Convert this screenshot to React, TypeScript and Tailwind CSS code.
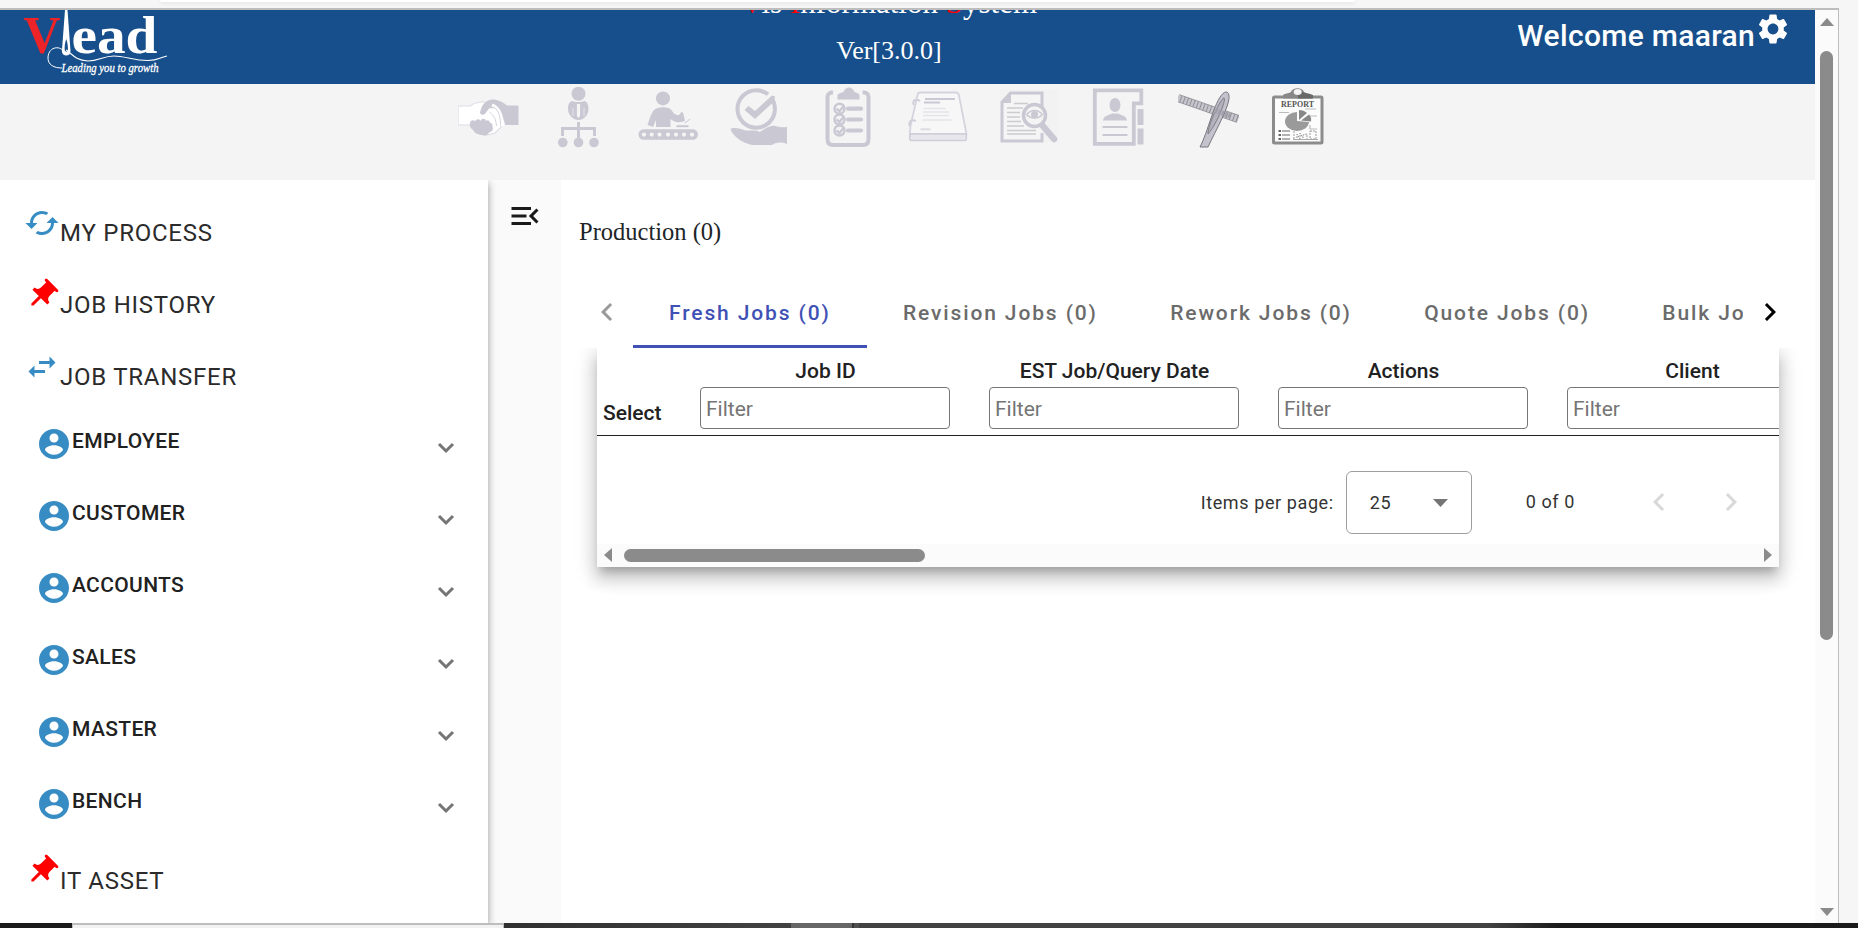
import React from "react";

const C = "#c9c8d3";

function Logo() {
  return (
    <svg width="170" height="74" viewBox="0 10 170 74" className="block">
      <text x="23.5" y="52.5" fontFamily="Liberation Serif, serif" fontWeight="700" fontSize="53" fill="#ec2427" textLength="37" lengthAdjust="spacingAndGlyphs">V</text>
      <text x="71.5" y="52.5" fontFamily="Liberation Serif, serif" fontWeight="700" fontSize="52" fill="#fff" textLength="86" lengthAdjust="spacingAndGlyphs">ead</text>
      <path d="M65 10h2.5l3 41c.2 6-8.600 6-8.600 0z" fill="#fff" />
      <path d="M66.200 39c-1.500 4-1.800 9-1.400 11.500.6 1.500 2.600 1.500 3 0 .4-3-.2-8-1.600-11.500z" fill="#164f8b" />
      <path d="M65 53c-4-8-16-7-17 4-.5 8 6 11 14 11" fill="none" stroke="#fff" strokeWidth="1" />
      <path d="M66 50c6 4 9 10 22 11 11 0 15-5 26-5s19 4.500 34 4.500c11 0 10-2.500 19-4.500" fill="none" stroke="#fff" strokeWidth="1.100" />
      <text x="61.5" y="72" fontFamily="Liberation Serif, serif" fontStyle="italic" fontSize="12" fill="#fff" stroke="#fff" strokeWidth="0.3" textLength="97" lengthAdjust="spacingAndGlyphs">Leading you to growth</text>
    </svg>
  );
}

const toolIcons: React.ReactNode[] = [
  <>
    <path d="M0 20h12c5-4 13-5 18-3l14 9-1 15-6 6-8 2-14-10H0z" fill="#fff" stroke="#dddce4" strokeWidth="1.200" />
    <path d="M60.500 19.500H49c-5-4-12-7-17-5.500-5 1-9 6-10 13 1.500 3 5 2 6.500-1 1.500-3 4-4.500 8-3.500l6 3.500 5 13h13z" fill={C} />
    <path d="M12 37c0-2 3-4 5-1.500 1-3 5-3 5.500-.5 1-3 5-3 5.500 0 2-2 4 0 4 2 3 0 4 3 3 6-1 3-4 3-5 5-3 3-5 1-7 1-3-1-6-1-8-5-2-2-4-3-3-7z" fill={C} />
    <path d="M34 19c5 2 10 8 10.500 21M31 23c5 3 9 9 9.500 19M28 27c5 3 8 8 8.500 17" stroke="#fff" strokeWidth="3" fill="none" />
    <path d="M35.500 20.500c4 3 7 8 7 18M31.500 26c4 3 6.500 7 7 14" stroke={C} strokeWidth=".8" fill="none" />
  </>,
  <>
    <circle cx="30.500" cy="7.800" r="7" fill={C} />
    <path d="M24 15c-3 1-4 4-4 8 0 6 5 11 10.500 11s10-5 10-11c0-4-1-7-4-8l-3 1h-6z" fill={C} />
    <path d="M28.900 18h3.200v12l-1.600 2-1.600-2z" fill="#f4f4f4" />
    <path d="M25 22v8M36 22v8" stroke="#e4e3e9" strokeWidth="1" />
    <path d="M30.500 36v17M14.500 50v-7.500h32V50" stroke={C} strokeWidth="3" fill="none" />
    <circle cx="14.800" cy="56.500" r="4.800" fill={C} /><circle cx="30.500" cy="56.500" r="4.800" fill={C} /><circle cx="46" cy="56.500" r="4.800" fill={C} />
  </>,
  <>
    <circle cx="25" cy="12.400" r="7" fill={C} />
    <path d="M9.500 39c2-6 3.500-11 6-14.500 3-4 14-4.500 17.500-1 2 3 4 6 8 5.500l2.500-3 1.500.5 2 8.500-4.500 1c-4 1-7-1-10-3v8H18v-7l-3 7z" fill={C} />
    <path d="M38.500 40.200h12" stroke={C} strokeWidth="2" /><path d="M47 37l5-4" stroke={C} strokeWidth="1" />
    <rect x=".5" y="43.300" width="59.500" height="10.500" rx="5.200" fill={C} />
    {[6, 13.700, 21.500, 30, 38, 46, 54].map((x) => <circle key={x} cx={x} cy="48.600" r="2.100" fill="#f4f4f4" />)}
  </>,
  <>
    <circle cx="28.200" cy="23" r="18.700" fill="none" stroke={C} strokeWidth="4" />
    <path d="M27 27 46 8" stroke="#f4f4f4" strokeWidth="8" />
    <path d="M16.500 24l4-4 6.500 5L44 9.500l3 1-1 5L27 33z" fill={C} />
    <path d="M2.500 43c3-2 10-.5 15 1.500 8 0 12-.5 14 1.500 5-3 11-7.500 16-6 4 1.500 8 1.500 11.500 1v17c-6-2-10-2-15 1H24C15 57 5 51 2.500 43z" fill={C} />
  </>,
  <>
    <path d="M15 6.500h-1.500A4.500 4.500 0 0 0 9.500 11v42c0 4 2 6 5.500 6h30c3.500 0 5.500-2 5.500-6V11c0-3-2-4.500-4.500-4.500h-1.500" fill="none" stroke={C} strokeWidth="4" />
    <path d="M19.500 13.500V9c1-2 4-2 6-3 2-6 9-6 11 0 2 1 4.500 1 5 3v4.500z" fill={C} />
    {[22.700, 33.500, 44.500].map((y) => (
      <g key={y}>
        <circle cx="21.500" cy={y} r="5" fill="none" stroke={C} strokeWidth="2.400" />
        <path d={`M18.500 ${y}l3 2.500 4-5`} fill="none" stroke={C} strokeWidth="2.400" />
        <path d={`M30 ${y}h13`} stroke={C} strokeWidth="4.200" strokeLinecap="round" />
      </g>
    ))}
  </>,
  <>
    <path d="M12 6.500h36c2 0 2.500 1 3 3L58.500 48H1.800L2.500 40 9.500 9c.4-2 1-2.500 2.500-2.500z" fill="#f7f7f8" stroke="#d5d4de" strokeWidth="1.800" />
    <rect x="1.800" y="48" width="56.500" height="6.500" rx="1.500" fill="#e8e7ec" stroke="#cfced9" strokeWidth="1.600" />
    <path d="M12 15c-5-3-8 0-6 4M8 35c-5-2-8 1-6 5" fill="none" stroke="#d0cfda" strokeWidth="2" />
    <path d="M17 13h30M16 16.500h16" stroke={C} strokeWidth="2" />
    <path d="M15.500 22.500h22M15 26h26M15 29.500h26M14.500 34h29" stroke="#e5e5e9" strokeWidth="1.500" />
    <path d="M12.500 43.300h10" stroke="#dddce3" strokeWidth="2" />
  </>,
  <>
    <rect x="2" y="3" width="57" height="53" fill="#f2f2f3" />
    <path d="M44 26V7H12.500L4 16v39h40v-8" fill="#f5f5f5" stroke={C} strokeWidth="3" />
    <path d="M4 17h9V7z" fill={C} />
    <path d="M16 17.500h14M9 22h16M9 26.500h13M9 31h13M9 35.500h14M9 40h17M9 44.500h29M9 48h29" stroke="#cccbd0" strokeWidth="1.700" />
    <path d="m44 39 12 14" stroke={C} strokeWidth="6.500" strokeLinecap="round" />
    <circle cx="36.500" cy="29.500" r="11" fill="#f4f4f4" stroke={C} strokeWidth="3.500" />
    <path d="M28 29c5-6 12-6 17 0M29 29c4 4 11 4 15 0" fill="none" stroke={C} strokeWidth="1.500" /><circle cx="36.500" cy="28.500" r="3.500" fill={C} />
  </>,
  <>
    <path d="M6.800 4.300h46.500v13h-7.500v40.500h-39z" fill="none" stroke={C} strokeWidth="3.800" />
    <path d="M49.500 23h6v16h-6zM49.500 42.500h6v16h-6z" fill={C} />
    <ellipse cx="27" cy="19" rx="5.500" ry="7" fill={C} />
    <path d="M15 34.500c1-5 5-5 9-7h6c4 2 8 2 9 7z" fill={C} />
    <path d="M14.500 41h25M14.500 49h25" stroke={C} strokeWidth="2.200" />
  </>,
  <>
    <path d="M0 12 60 33" stroke="#8f8f96" strokeWidth="8" />
    <path d="M0 12 60 33" stroke="#c7c6ce" strokeWidth="6.500" strokeDasharray="2.500 1" />
    <path d="M22 61C30 46 36 16 45 7.500c4-3.500 6.500-.5 6 5C50 23 38 44 30 61z" fill="#c4c3cd" stroke="#77767e" strokeWidth="1" />
    <path d="M30 46C32 35 40 18 45.500 12c1.500-.5 1 3 0 6C42 30 35 42 30 48z" fill="#b4b3bd" stroke="#77767e" strokeWidth=".9" />
    <path d="M37 24.500 52 30" stroke="#a09fa9" strokeWidth="5" strokeDasharray="2.500 1" />
  </>,
  <>
    <rect x="5.500" y="11" width="48.500" height="46" rx="1" fill="#fcfcfc" stroke="#8c8c8c" strokeWidth="3" />
    <path d="M15 12.500V9c2-2 5-1 8-3 1.500-5 11.500-5 13 0 3 2 6 1 8 3v3.500z" fill="#888" /><path d="M30 4l7 3 8 2v3.500H30z" fill="#686868" />
    <ellipse cx="29.700" cy="6" rx="4" ry="3" fill="#f4f4f4" />
    <text x="13" y="20.500" fontFamily="Liberation Serif, serif" fontWeight="700" fontSize="8" fill="#555" textLength="33" lengthAdjust="spacingAndGlyphs">REPORT</text>
    <path d="M29 26a12 9.500 0 1 0 12 10l-12-1z" fill="#9a9a9a" /><path d="M31 24v10l8-7c-2-2-5-3-8-3zM33 34.500l8-6c2 2 2.500 4 2 7z" fill="#888" />
    <path d="M11 26.500h10M37 23h11M42 30h7M42 39v4h7" fill="none" stroke="#bbb" strokeWidth="1.200" />
    <path d="M10.500 45h2.500M10.500 49h2.500M10.500 53h2.500" stroke="#666" strokeWidth="2" /><path d="M14 45h8M14 49h8M14 53h8" stroke="#999" strokeWidth="1.600" />
    <path d="M26 45v8M29 52v-4l3 5v-6l3 5v-3l4-1v5M42 45h6v8h-6z" fill="none" stroke="#999" strokeWidth="1" strokeDasharray="2 1" /><path d="M25 53.500h25" stroke="#aaa" />
  </>,
];

const P = {
  cached: "m19 8-4 4h3c0 3.310-2.690 6-6 6-1.010 0-1.970-.25-2.800-.7l-1.460 1.460C8.970 19.540 10.430 20 12 20c4.420 0 8-3.580 8-8h3l-4-4zM6 12c0-3.310 2.690-6 6-6 1.010 0 1.970.25 2.800.7l1.460-1.460C15.030 4.460 13.570 4 12 4c-4.420 0-8 3.580-8 8H1l4 4 4-4H6z",
  pin: "M16 9V4h1c.55 0 1-.45 1-1s-.45-1-1-1H7c-.55 0-1 .45-1 1s.45 1 1 1h1v5c0 1.660-1.340 3-3 3v2h5.970v7l1 1 1-1v-7H19v-2c-1.660 0-3-1.340-3-3z",
  swap: "M6.990 11 3 15l3.990 4v-3H14v-2H6.990v-3zM21 9l-3.990-4v3H10v2h7.010v3L21 9z",
  account: "M12 2C6.480 2 2 6.480 2 12s4.480 10 10 10 10-4.480 10-10S17.520 2 12 2zm0 3c1.660 0 3 1.340 3 3s-1.340 3-3 3-3-1.340-3-3 1.340-3 3-3zm0 14.200c-2.500 0-4.710-1.280-6-3.220.03-1.990 4-3.080 6-3.080 1.990 0 5.970 1.090 6 3.080-1.290 1.940-3.500 3.220-6 3.220z",
  settings: "M19.140 12.940c.04-.3.060-.61.060-.94 0-.32-.02-.64-.07-.94l2.030-1.580c.18-.14.230-.41.120-.61l-1.920-3.320c-.12-.22-.37-.29-.59-.22l-2.390.96c-.5-.38-1.030-.7-1.620-.94l-.36-2.540c-.04-.24-.24-.41-.48-.41h-3.840c-.24 0-.43.170-.47.410l-.36 2.540c-.59.240-1.130.570-1.620.940l-2.390-.96c-.22-.08-.47 0-.59.220L2.740 8.870c-.12.210-.08.470.12.610l2.030 1.580c-.05.300-.09.630-.09.940s.02.640.07.940l-2.030 1.580c-.18.140-.23.410-.12.610l1.920 3.320c.12.220.370.290.590.220l2.390-.96c.5.380 1.030.700 1.620.940l.36 2.540c.05.240.240.410.480.410h3.840c.24 0 .440-.17.470-.41l.36-2.540c.59-.24 1.130-.56 1.620-.94l2.390.96c.22.080.470 0 .590-.22l1.920-3.320c.12-.22.070-.47-.12-.61l-2.010-1.580zM12 15.600c-1.980 0-3.600-1.620-3.600-3.600s1.620-3.600 3.600-3.600 3.600 1.620 3.600 3.600-1.620 3.600-3.600 3.600z",
  left: "M15.410 7.410 14 6l-6 6 6 6 1.410-1.410L10.830 12z",
  right: "M10 6 8.590 7.410 13.170 12l-4.580 4.590L10 18l6-6z",
};

function Icon({ d, className }: { d: string; className?: string }) {
  return (
    <svg viewBox="0 0 24 24" fill="currentColor" className={`size-9 shrink-0 ${className ?? ""}`}>
      <path d={d} />
    </svg>
  );
}

function LinkRow({ d, icon, label }: { d: string; icon: string; label: string }) {
  return (
    <div className="flex h-18 pl-6">
      <Icon d={d} className={`mt-2 ${icon}`} />
      <span className="pt-[18px] text-[24px] leading-9 tracking-[0.75px] text-[#2b2b2b]">{label}</span>
    </div>
  );
}

function PanelRow({ label }: { label: string }) {
  return (
    <div className="flex h-18 pl-9">
      <Icon d={P.account} className="mt-[13px] text-[#378dc3]" />
      <span className="pt-3 text-[21px] leading-8 font-medium tracking-[0.35px] text-[#212121]">{label}</span>
      <svg width="18" height="12" viewBox="0 0 18 12" className="mt-[29px] mr-[33px] ml-auto">
        <path d="m2 2 7 7 7-7" fill="none" stroke="#757575" strokeWidth="3" />
      </svg>
    </div>
  );
}

const tabs = ["Revision Jobs (0)", "Rework Jobs (0)", "Quote Jobs (0)", "Bulk Jobs (0)"];
const columns = ["Job ID", "EST Job/Query Date", "Actions", "Client"];

export default function App() {
  return (
    <div className="flex h-[928px] w-[1858px] flex-col overflow-hidden bg-[#f6f6f6] font-[Roboto,sans-serif]">
      <div className="h-2 shrink-0 bg-[#f6f6f6] pl-[160px]">
        <div className="h-0.5 w-[1195px] rounded-b-full bg-white shadow-[0_1px_4px_rgba(0,0,0,0.12)]" />
      </div>
      <div className="flex h-[915px] w-[1839px] shrink-0 border-t-2 border-r border-[#bdbdbd]">
        <div className="flex w-[1815px] shrink-0 flex-col bg-white">
          <header className="flex h-[74px] shrink-0 overflow-hidden bg-[#164f8b] text-white">
            <div className="w-[600px]"><Logo /></div>
            <div className="-mt-[25px] flex w-[578px] flex-col items-center font-['Liberation_Serif',serif]">
              <div className="h-9 text-[31px] leading-9 whitespace-nowrap">
                <span className="text-[#f00]">V</span>is <span className="text-[#f00]">I</span>nformation <span className="text-[#f00]">S</span>ystem
              </div>
              <div className="pt-3 text-[26px] leading-9">Ver[3.0.0]</div>
            </div>
            <div className="flex flex-1 justify-end pr-[24px]">
              <span className="pt-2 text-[30px] leading-9 font-medium tracking-[0.300px]">Welcome maaran</span>
              <Icon d={P.settings} className="mt-px" />
            </div>
          </header>
          <div className="flex h-24 shrink-0 bg-[#f4f4f4] pt-0.5 pl-[443.500px]">
            {toolIcons.map((icon, i) => (
              <div key={i} className="flex w-[90px] justify-center">
                <svg width="61" height="62" viewBox="0 0 61 62">{icon}</svg>
              </div>
            ))}
          </div>
          <div className="flex h-[743px] shrink-0 overflow-hidden bg-[#fafafa]">
            <nav className="z-10 w-[488px] shrink-0 bg-white pt-[17px] shadow-[0_3px_8px_rgba(0,0,0,0.4)]">
              <LinkRow d={P.cached} icon="text-[#378dc3]" label="MY PROCESS" />
              <LinkRow d={P.pin} icon="rotate-45 text-[#f00]" label="JOB HISTORY" />
              <LinkRow d={P.swap} icon="text-[#378dc3]" label="JOB TRANSFER" />
              {["EMPLOYEE", "CUSTOMER", "ACCOUNTS", "SALES", "MASTER", "BENCH"].map((l) => <PanelRow key={l} label={l} />)}
              <LinkRow d={P.pin} icon="rotate-45 text-[#f00]" label="IT ASSET" />
            </nav>
            <div className="w-[73px] shrink-0 pt-[18px] pl-[19px]">
              <svg viewBox="0 0 24 24" className="size-9 text-[#1a1a1a]" fill="currentColor">
                <path d="M3 18h13v-2H3v2zM3 13h10v-2H3v2zm0-7v2h13V6H3zm18 9.590L17.420 12 21 8.410 19.590 7l-5 5 5 5L21 15.590z" />
              </svg>
            </div>
            <main className="flex w-[1254px] shrink-0 flex-col bg-white">
              <h1 className="h-[96px] pt-[34px] pl-[18px] font-['Liberation_Serif',serif] text-[24.500px] leading-9 text-[#212529]">Production (0)</h1>
              <div className="ml-9 flex h-[72px] w-[1182px] text-[21px] font-medium tracking-[1.875px]">
                <div className="flex w-9 shrink-0 items-center justify-center text-[#9a9a9a]"><Icon d={P.left} className="-ml-[17px]" /></div>
                <div className="flex w-[1110px] shrink-0 overflow-hidden whitespace-nowrap">
                  <div className="flex shrink-0 items-center border-b-3 border-[#3f51b5] px-9 pt-[6px] text-[#3f51b5]">Fresh Jobs (0)</div>
                  {tabs.map((t) => <div key={t} className="flex shrink-0 items-center px-[36.200px] pt-[3px] text-[#6b6b6b]">{t}</div>)}
                </div>
                <div className="flex w-9 shrink-0 items-center justify-center text-black"><Icon d={P.right} className="-mr-[17px]" /></div>
              </div>
              <div className="h-[280px] overflow-hidden px-9">
                <section className="flex h-[219px] flex-col overflow-hidden bg-white shadow-[0_8px_8px_-4px_rgba(0,0,0,0.2),0_12px_15px_2px_rgba(0,0,0,0.14),0_4px_21px_3px_rgba(0,0,0,0.12)]">
                  <div className="flex h-[88px] shrink-0 overflow-hidden border-b border-[#212121] text-[21px] font-medium text-[#212121]">
                    <div className="w-[103px] shrink-0 pt-[49px] pl-1.5 leading-8">Select</div>
                    {columns.map((c) => (
                      <div key={c} className="mr-[39px] w-[250px] shrink-0 pt-[7px] text-center">
                        <div className="h-8 pl-px leading-8">{c}</div>
                        <div className="flex h-[42px] items-center rounded-[4px] border border-[#767676] pt-[3px] pl-[5px] font-normal text-[#757575]">Filter</div>
                      </div>
                    ))}
                  </div>
                  <div className="flex h-[107px] shrink-0 items-center justify-end pt-[25px] pr-[30px] text-[18px] tracking-[0.600px] text-[#333]">
                    <span>Items per page:</span>
                    <div className="ml-3 flex h-[63px] w-[126px] items-center justify-between rounded-md border border-[#9e9e9e] pr-[23px] pl-[23px]">
                      <span>25</span>
                      <svg width="15" height="8" viewBox="0 0 15 8" className="mt-0.5"><path d="M0 0h15L7.500 8z" fill="#757575" /></svg>
                    </div>
                    <span className="-mt-0.5 ml-[54px]">0 of 0</span>
                    <Icon d={P.left} className="ml-[66px] text-[#d8d8d8]" />
                    <Icon d={P.right} className="ml-9 text-[#d8d8d8]" />
                  </div>
                  <div className="mt-px flex h-[23px] shrink-0 items-center bg-[#fbfbfb] pr-[7px] pb-px pl-[7px]">
                    <svg width="8" height="14" viewBox="0 0 8 14"><path d="M8 0v14L0 7z" fill="#8b8b8b" /></svg>
                    <div className="ml-3 h-[13px] w-[301px] rounded-full bg-[#8b8b8b]" />
                    <svg width="8" height="14" viewBox="0 0 8 14" className="ml-auto"><path d="M0 0v14l8-7z" fill="#8b8b8b" /></svg>
                  </div>
                </section>
              </div>
            </main>
          </div>
        </div>
        <div className="flex w-[23px] shrink-0 flex-col items-center bg-[#fbfbfb] pt-2">
          <svg width="14" height="8" viewBox="0 0 14 8"><path d="M0 8h14L7 0z" fill="#8b8b8b" /></svg>
          <div className="mt-[25px] h-[589px] w-[13px] rounded-full bg-[#8b8b8b]" />
          <svg width="14" height="8" viewBox="0 0 14 8" className="mt-auto mb-[7px]"><path d="M0 0h14L7 8z" fill="#8b8b8b" /></svg>
        </div>
      </div>
      <div className="flex h-[5px] shrink-0 bg-[#1b1b1b]">
        <div className="w-[72px]" />
        <div className="w-[432px] border-x border-t-2 border-[#bdbdbd] bg-[#f2f2f2]" />
        <div className="w-[287px] bg-linear-to-r from-[#303030] to-[#424242]" />
        <div className="w-[61px] bg-[#666]" />
        <div className="w-[2px] bg-[#333]" />
        <div className="w-[5px] bg-[#505050]" />
        <div className="w-[630px] bg-[#424242]" />
        <div className="w-[70px] bg-linear-to-r from-[#424242] to-[#1b1b1b]" />
      </div>
    </div>
  );
}
